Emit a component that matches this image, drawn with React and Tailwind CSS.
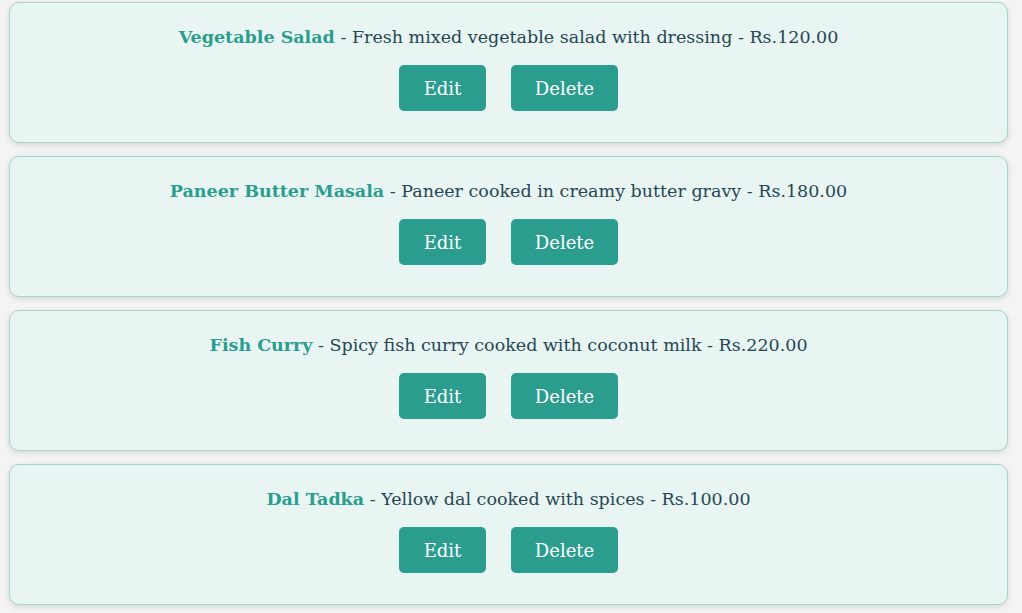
import React from 'react';

const items = [
    { name: 'Vegetable Salad', description: 'Fresh mixed vegetable salad with dressing', price: 120 },
    { name: 'Paneer Butter Masala', description: 'Paneer cooked in creamy butter gravy', price: 180 },
    { name: 'Fish Curry', description: 'Spicy fish curry cooked with coconut milk', price: 220 },
    { name: 'Dal Tadka', description: 'Yellow dal cooked with spices', price: 100 },
];

const MenuCard = ({ item }) => (
    <div className="h-[141px] w-[999px] ml-[9px] flex flex-col items-center rounded-[10px] border border-[#a3d6cb] bg-[#e8f5f2] shadow-[0_2px_6px_rgba(0,0,0,0.12)]">
        <p className="mt-[20px] h-[28px] leading-[28px] text-[17.5px] text-[#264653]">
            <span className="font-bold text-[#2a9d8f]">{item.name}</span>
            {' - '}{item.description} - Rs.{item.price.toFixed(2)}
        </p>
        <div className="mt-[14px] flex gap-[25px]">
            <button className="h-[46px] w-[87px] rounded-[5px] bg-[#2a9d8f] text-[18px] text-white">Edit</button>
            <button className="h-[46px] w-[107px] rounded-[5px] bg-[#2a9d8f] text-[18px] text-white">Delete</button>
        </div>
    </div>
);

export default function App() {
    return (
        <div className="min-h-[613px] bg-[#f4f4f4] pt-[2px] flex flex-col gap-[13px] font-['Georgia','DejaVu_Serif',serif]">
            {items.map(item => (
                <MenuCard key={item.name} item={item} />
            ))}
        </div>
    );
}
